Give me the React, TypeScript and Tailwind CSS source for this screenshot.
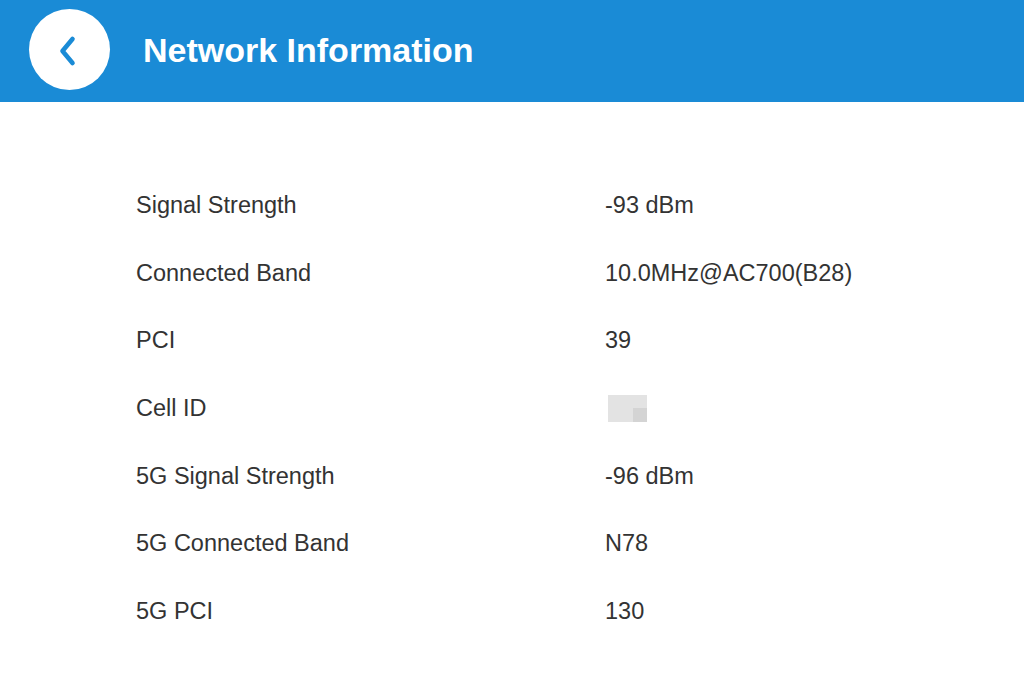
import React from "react";

const rows: { label: string; value: string | null }[] = [
  { label: "Signal Strength", value: "-93 dBm" },
  { label: "Connected Band", value: "10.0MHz@AC700(B28)" },
  { label: "PCI", value: "39" },
  { label: "Cell ID", value: null },
  { label: "5G Signal Strength", value: "-96 dBm" },
  { label: "5G Connected Band", value: "N78" },
  { label: "5G PCI", value: "130" },
];

export default function App() {
  return (
    <div
      className="w-[1024px] h-[674px] bg-white overflow-hidden"
      style={{ fontFamily: '"Liberation Sans", Arial, sans-serif' }}
    >
      <header className="h-[102px] bg-[#1a8bd6] flex items-center">
        <div className="ml-[29px] mb-[3px] w-[81px] h-[81px] rounded-full bg-white flex items-center justify-center">
          <svg width="24" height="32" viewBox="0 0 24 32" className="mr-[3px] mt-[2px]">
            <path
              d="M16.5 4 L6.5 16 L16.5 28"
              fill="none"
              stroke="#1a8bd6"
              strokeWidth="4.6"
              strokeLinecap="round"
              strokeLinejoin="round"
            />
          </svg>
        </div>
        <h1 className="ml-[33px] mb-[3px] text-white font-bold text-[34px] leading-none">
          Network Information
        </h1>
      </header>
      <div className="pt-[70px]">
        {rows.map((r) => (
          <div key={r.label} className="h-[67.6px] flex items-center text-[23.5px] text-[#333333]">
            <div className="w-[605px] pl-[136px]">{r.label}</div>
            <div>
              {r.value !== null ? (
                r.value
              ) : (
                <div className="ml-[3px] w-[39px] h-[27px] bg-[#e3e3e3] relative">
                  <div className="absolute right-0 bottom-0 w-[14px] h-[14px] bg-[#d4d4d4]" />
                </div>
              )}
            </div>
          </div>
        ))}
      </div>
    </div>
  );
}
